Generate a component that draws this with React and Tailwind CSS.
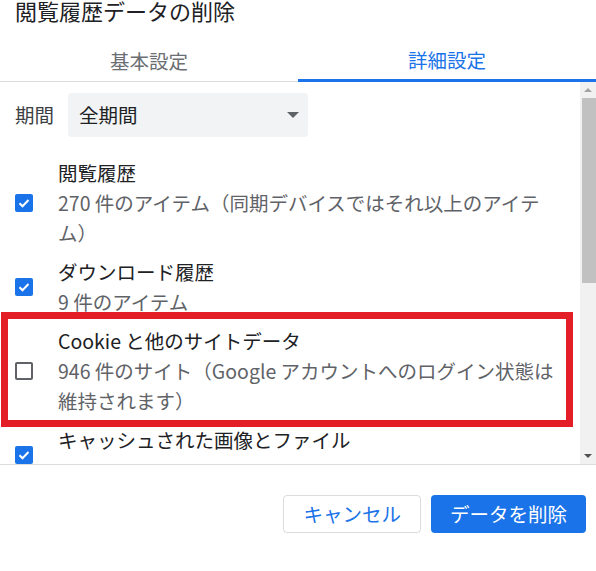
import {useState} from 'react';

const items = [
    { id: 'history', title: '閲覧履歴', lines: ['270 件のアイテム（同期デバイスではそれ以上のアイテ', 'ム）'], checked: true },
    { id: 'downloads', title: 'ダウンロード履歴', lines: ['9 件のアイテム'], checked: true },
    { id: 'cookies', title: 'Cookie と他のサイトデータ', lines: ['946 件のサイト（Google アカウントへのログイン状態は', '維持されます）'], checked: false, marked: true },
    { id: 'cache', title: 'キャッシュされた画像とファイル', lines: [''], checked: true },
];

function Checkbox({ checked, onChange }) {
    return (
        <button onClick={onChange} className="w-[18px] h-[18px] shrink-0 flex items-center justify-center">
            {checked ? (
                <span className="w-[18px] h-[18px] rounded-[2px] bg-[#1a73e8] flex items-center justify-center">
                    <svg width="14" height="14" viewBox="0 0 14 14" fill="none">
                        <path d="M2.5 7.2l3 3 6-6.2" stroke="white" strokeWidth="2" />
                    </svg>
                </span>
            ) : (
                <span className="w-[18px] h-[18px] rounded-[2px] border-2 border-[#5f6368]" />
            )}
        </button>
    );
}

export default function App() {
    const [tab, setTab] = useState(1);
    const [checks, setChecks] = useState(() => Object.fromEntries(items.map(i => [i.id, i.checked])));

    const toggle = (id) => setChecks(c => ({ ...c, [id]: !c[id] }));

    return (
        <div className="w-[596px] h-[571px] bg-white overflow-hidden flex flex-col font-['Noto_Sans_CJK_JP','Noto_Sans',sans-serif] text-[#202124]">
            <h1 className="h-[20px] leading-[20px] pl-[15px] text-[22px] font-normal">閲覧履歴データの削除</h1>

            <div className="flex">
                {['基本設定', '詳細設定'].map((t, i) => (
                    <button
                        key={t}
                        onClick={() => setTab(i)}
                        className={tab === i
                            ? 'w-1/2 h-[62px] pt-[20px] text-[19.5px] leading-[30px] text-[#1a73e8] border-b-[3px] border-[#1a73e8]'
                            : 'w-1/2 h-[62px] pt-[20px] text-[19.5px] leading-[30px] text-[#6b6e72] border-b border-[#dadce0]'}
                    >
                        {t}
                    </button>
                ))}
            </div>

            <div className="h-[382px] flex">
                <div className="w-[580px] overflow-hidden pt-[11px]">
                    <div className="flex items-center pl-[15px]">
                        <span className="w-[53px] text-[19.5px] leading-[30px] text-[#3c4043]">期間</span>
                        <div className="w-[240px] h-[44px] rounded bg-[#f1f3f4] flex items-center justify-between pl-[11px] pr-[9px]">
                            <span className="text-[19.5px] leading-[30px]">全期間</span>
                            <svg width="12" height="6" viewBox="0 0 12 6">
                                <path d="M0 0h12L6 6z" fill="#5f6368" />
                            </svg>
                        </div>
                    </div>

                    <div className="flex flex-col gap-[9px] mt-[21px]">
                        {items.map(item => (
                            <div key={item.id} className="relative flex items-center pl-[15px] gap-[25px]">
                                <Checkbox checked={checks[item.id]} onChange={() => toggle(item.id)} />
                                <div className="text-[19.5px] leading-[30px] whitespace-nowrap">
                                    <div>{item.title}</div>
                                    {item.lines.map((l, i) => (
                                        <div key={i} className="h-[30px] text-[#5f6368]">{l}</div>
                                    ))}
                                </div>
                                {item.marked && (
                                    <div className="absolute -top-[14px] -bottom-[11px] left-[1px] right-[7px] border-[7px] border-[#e41e26] pointer-events-none" />
                                )}
                            </div>
                        ))}
                    </div>
                </div>

                <div className="w-[16px] bg-[#f1f1f1] flex flex-col">
                    <div className="h-[16px] flex items-center justify-center">
                        <svg width="8" height="4" viewBox="0 0 8 4"><path d="M0 4h8L4 0z" fill="#a3a3a3" /></svg>
                    </div>
                    <div className="h-[185px] ml-[2px] bg-[#c1c1c1]" />
                    <div className="flex-1" />
                    <div className="h-[16px] flex items-center justify-center">
                        <svg width="8" height="4" viewBox="0 0 8 4"><path d="M0 0h8L4 4z" fill="#505050" /></svg>
                    </div>
                </div>
            </div>

            <div className="border-t border-[#dadce0] flex justify-end gap-[10px] pt-[30px] pr-[10px]">
                <button className="h-[38px] px-[19px] rounded border border-[#dadce0] text-[#1a73e8] text-[19.5px] leading-[30px]">キャンセル</button>
                <button className="h-[38px] px-[19px] rounded bg-[#1a73e8] text-white text-[19.5px] leading-[30px]">データを削除</button>
            </div>
        </div>
    );
}
